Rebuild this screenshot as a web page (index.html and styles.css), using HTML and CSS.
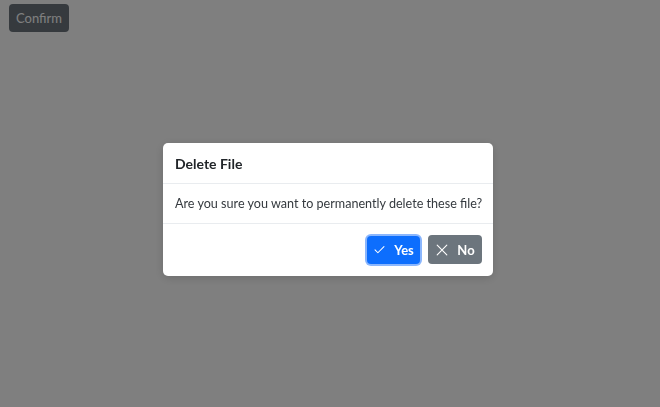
FILE: index.html
```html
<!DOCTYPE html>
<html lang="en">
<head>
<meta charset="utf-8">
<title>Confirm</title>
<link rel="stylesheet" href="styles.css">
</head>
<body>
<button class="btn btn-secondary trigger">Confirm</button>
<div class="backdrop">
  <div class="modal">
    <div class="modal-header">
      <h5 class="modal-title">Delete File</h5>
    </div>
    <div class="modal-body">Are you sure you want to permanently delete these file?</div>
    <div class="modal-footer">
      <button class="btn btn-primary focused">
        <svg class="icon" viewBox="0 0 16 16" width="13" height="13"><path d="M2.5 8.5 L6 12 L13.5 4.5" fill="none" stroke="currentColor" stroke-width="1.3" stroke-linecap="round" stroke-linejoin="round"/></svg>
        <span>Yes</span>
      </button>
      <button class="btn btn-gray">
        <svg class="icon" viewBox="0 0 16 16" width="14" height="14"><path d="M2.5 2.5 L13.5 13.5 M13.5 2.5 L2.5 13.5" fill="none" stroke="currentColor" stroke-width="1.3" stroke-linecap="round"/></svg>
        <span>No</span>
      </button>
    </div>
  </div>
</div>
</body>
</html>
```
FILE: styles.css
```css
* { box-sizing: border-box; }
html, body { margin: 0; padding: 0; }
body {
  background: #fff;
  font-family: Lato, "Open Sans", "Liberation Sans", sans-serif;
  font-size: 13px;
  color: #212529;
  height: 407px;
  overflow: hidden;
}
.btn {
  border: none;
  border-radius: 4px;
  font-family: inherit;
  font-size: 13px;
  display: inline-flex;
  align-items: center;
  justify-content: center;
  gap: 8px;
  cursor: pointer;
}
.trigger {
  margin: 4px 0 0 9px;
  width: 60px;
  height: 28px;
  background: #6c757d;
  color: #fff;
  padding: 0;
  font-size: 13px;
}
.backdrop {
  position: fixed;
  inset: 0;
  background: rgba(0,0,0,0.5);
  display: flex;
  justify-content: center;
  align-items: flex-start;
  padding-top: 143px;
  padding-right: 4px;
}
.modal {
  width: 330px;
  background: #fff;
  border-radius: 5px;
  box-shadow: 0 2px 10px rgba(0,0,0,0.15);
  overflow: hidden;
}
.modal-header {
  height: 41px;
  display: flex;
  align-items: center;
  padding: 0 12px;
  border-bottom: 1px solid #e9ecef;
}
.modal-title {
  margin: 0;
  font-size: 14px;
  font-weight: 700;
  color: #212529;
}
.modal-body {
  height: 40px;
  display: flex;
  align-items: center;
  padding: 0 12px;
  border-bottom: 1px solid #e9ecef;
  color: #353a3f;
  font-size: 12.6px;
  white-space: nowrap;
}
.modal-footer {
  height: 52px;
  display: flex;
  justify-content: flex-end;
  align-items: center;
  gap: 8px;
  padding: 0 11px 1px;
}
.btn-primary {
  background: #0d6efd;
  color: #fff;
  width: 53px;
  height: 28px;
  font-weight: 700;
}
.focused { box-shadow: 0 0 0 2px #8ab6fd; }
.btn-gray {
  background: #6c757d;
  color: #fff;
  width: 54px;
  height: 29px;
  font-weight: 700;
}
.icon { display: block; }
```
